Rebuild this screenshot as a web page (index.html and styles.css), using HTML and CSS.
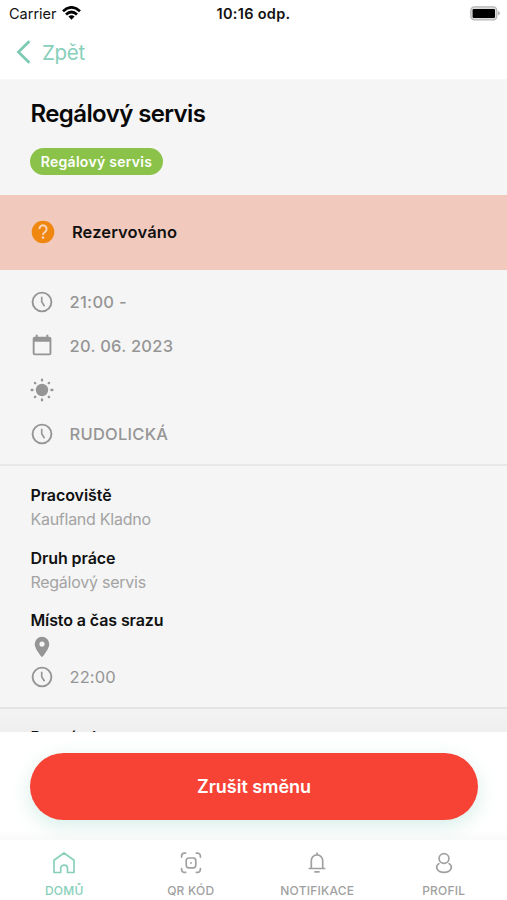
FILE: index.html
```html
<!DOCTYPE html>
<html lang="cs">
<head>
<meta charset="utf-8">
<title>Regálový servis</title>
<link rel="stylesheet" href="styles.css">
</head>
<body>
<svg class="defs" width="0" height="0" aria-hidden="true">
  <symbol id="clock" viewBox="0 0 24 24"><circle cx="12" cy="12" r="9.4" fill="none" stroke="currentColor" stroke-width="1.9"/><path d="M11.7 6.7v5.1l2.8 4.4" fill="none" stroke="currentColor" stroke-width="1.6"/></symbol>
</svg>
<div class="app">
  <header class="header">
    <div class="status">
      <div class="carrier"><span class="carrier-name">Carrier</span>
        <svg width="19" height="14" viewBox="0 0 19 14"><g fill="none" stroke="#000" stroke-width="2.7"><path d="M1 5.2Q9.5-2.5 18 5.2"/><path d="M4 8.6Q9.5 3.4 15 8.6"/></g><path d="M6.4 10.6Q9.5 8 12.6 10.6L9.5 13.8Z"/></svg>
      </div>
      <div class="time">10:16 odp.</div>
      <svg class="battery" width="30" height="15" viewBox="0 0 30 15"><rect x=".8" y=".8" width="26" height="13" rx="3.6" fill="#ddd" stroke="#b5b5b5" stroke-width="1.3"/><rect x="2.6" y="2.9" width="22.4" height="9" rx="1.2"/><path d="M28 5v4.6q2-.8 2-2.3T28 5" fill="#b5b5b5"/></svg>
    </div>
    <nav class="nav">
      <svg width="15" height="24" viewBox="0 0 15 24"><path d="M13.4 1.3L2.4 12l11 10.7" fill="none" stroke="#7dcab4" stroke-width="2.7"/></svg>
      <span class="back">Zpět</span>
    </nav>
  </header>
  <main class="content">
    <section class="hero"><h1>Regálový servis</h1><div class="badge">Regálový servis</div></section>
    <section class="banner">
      <svg width="24" height="24" viewBox="0 0 24 24"><circle cx="12" cy="12" r="11.3" fill="#f08710"/><path d="M8.4 9.1a3.6 3.6 0 1 1 5.7 2.8c-1.3.9-2.1 1.4-2.1 3" fill="none" stroke="#f8d3b8" stroke-width="2"/><circle cx="12" cy="17.6" r="1.3" fill="#f8d3b8"/></svg>
      <span>Rezervováno</span>
    </section>
    <section class="facts">
      <div class="fact"><svg width="24" height="24"><use href="#clock"/></svg><span class="t-time">21:00 -</span></div>
      <div class="fact"><svg width="24" height="24" viewBox="0 0 24 24"><path fill="currentColor" fill-rule="evenodd" d="M5.7.8h2v2h8.6v-2h2v2h1.1a2 2 0 0 1 2 2v14.4a2 2 0 0 1-2 2H4.7a2 2 0 0 1-2-2V4.8a2 2 0 0 1 2-2h1zM4.6 7.7v11.7h14.9V7.7z"/></svg><span class="t-date">20. 06. 2023</span></div>
      <div class="fact"><svg width="24" height="24" viewBox="0 0 24 24"><circle cx="12" cy="12" r="6.2" fill="currentColor"/><path d="M12 1.6v1M12 21.4v1M1.6 12h1M21.4 12h1M4.9 4.9l.4.4M18.7 18.7l.4.4M4.9 19.1l.4-.4M18.7 5.3l.4-.4" stroke="currentColor" stroke-width="2.3" stroke-linecap="round"/></svg></div>
      <div class="fact"><svg width="24" height="24"><use href="#clock"/></svg><span class="t-place">RUDOLICKÁ</span></div>
    </section>
    <section class="details">
      <div class="item"><h2 class="h-site">Pracoviště</h2><p class="p-site">Kaufland Kladno</p></div>
      <div class="item"><h2 class="h-type">Druh práce</h2><p class="p-type">Regálový servis</p></div>
      <h2 class="h-meet">Místo a čas srazu</h2>
      <svg class="pin" width="24" height="24" viewBox="0 0 24 24"><path fill="currentColor" fill-rule="evenodd" d="M12 1.8a7.3 7.3 0 0 0-7.3 7.3c0 5.3 7.3 13.2 7.3 13.2s7.3-7.9 7.3-13.2A7.3 7.3 0 0 0 12 1.8m0 4.7a2.6 2.6 0 1 1 0 5.2 2.6 2.6 0 0 1 0-5.2"/></svg>
      <div class="fact meet"><svg width="24" height="24"><use href="#clock"/></svg><span class="t-meet">22:00</span></div>
    </section>
    <section class="notes"><h2>Poznámka</h2></section>
  </main>
  <div class="action"><button class="cancel">Zrušit směnu</button></div>
  <footer class="tabs">
    <div class="tab active"><svg width="24" height="24" viewBox="0 0 24 24"><path d="M2 9.2L12 2l10 7.2v12.3h-6.5v-4.4c0-4-6.8-4-6.8 0v4.4H2z" fill="none" stroke="currentColor" stroke-width="1.7" stroke-linejoin="round"/></svg><span class="l-home">DOMŮ</span></div>
    <div class="tab"><svg width="24" height="24" viewBox="0 0 24 24"><g fill="none" stroke="currentColor" stroke-width="1.7" stroke-linecap="round"><path d="M2.6 6.1V5a2.8 2.8 0 0 1 2.8-2.8h1.2M17.4 2.2h1.2A2.8 2.8 0 0 1 21.4 5v1.1M21.4 17.5v1.1a2.8 2.8 0 0 1-2.8 2.8h-1.2M6.6 21.4H5.4a2.8 2.8 0 0 1-2.8-2.8v-1.1"/><rect x="7.2" y="7" width="9.6" height="9.8" rx="2.5"/></g><circle cx="12" cy="12" r=".9" fill="currentColor"/></svg><span class="l-qr">QR KÓD</span></div>
    <div class="tab"><svg width="24" height="24" viewBox="0 0 24 24"><path d="M12 2.2v1.4M4.3 17.5h15.4M6.3 17.2V9.6a5.7 5.7 0 0 1 11.4 0v7.6M10 20.8h4" fill="none" stroke="currentColor" stroke-width="1.7" stroke-linecap="round"/></svg><span class="l-note">NOTIFIKACE</span></div>
    <div class="tab"><svg width="24" height="24" viewBox="0 0 24 24"><g fill="none" stroke="currentColor" stroke-width="1.7" stroke-linecap="round"><circle cx="12" cy="7.5" r="4.9"/><path d="M6.9 12.6c-4.3 3.2-2.1 8.7 5.1 8.7s9.4-5.5 5.1-8.7"/></g></svg><span class="l-prof">PROFIL</span></div>
  </footer>
</div>
</body>
</html>
```

FILE: styles.css
```css
* { box-sizing: border-box; }
body { margin: 0; font-family: Inter, "Liberation Sans", sans-serif; background: #fff; color: #111; }
h1, h2, p { margin: 0; }
svg { display: block; flex: none; }
.defs { position: absolute; }
span, h1, h2, p, .time, .badge { white-space: nowrap; }
.app { width: 507px; height: 900px; display: flex; flex-direction: column; overflow: hidden; }
.header { height: 80px; flex: none; border-bottom: 1px solid #f8f8f8; }
.status { height: 28px; display: grid; grid-template-columns: 1fr auto 1fr; align-items: center; padding: 0 7px 1px 9px; font-size: 14.5px; }
.carrier { display: flex; align-items: center; gap: 5px; }
.carrier svg { margin-top: -1px; }
.time { font-weight: 600; padding-right: 2px; letter-spacing: .3px; }
.battery { justify-self: end; }
.nav { height: 48px; display: flex; align-items: center; gap: 11px; padding-left: 16px; color: #88cfbb; font-size: 20.5px; letter-spacing: -.3px; }
.content { height: 652px; flex: none; overflow: hidden; background: #f5f5f5; display: flex; flex-direction: column; }
.hero { height: 115px; flex: none; padding: 18px 30px 0; }
h1 { font-size: 24px; line-height: 32px; font-weight: 600; letter-spacing: -.6px; padding-left: .5px; color: #080808; }
.badge { width: 133px; height: 27px; margin-top: 18px; border-radius: 14px; background: #8bc34a; color: #fff; display: flex; align-items: center; justify-content: center; font-size: 14px; font-weight: 600; letter-spacing: .28px; padding-bottom: 1px; }
.banner { height: 75px; flex: none; background: #f1cabd; display: flex; align-items: center; gap: 16.5px; padding: 0 0 1px 31.4px; font-size: 16.5px; font-weight: 600; letter-spacing: .12px; }
.facts { height: 196px; flex: none; padding: 10px 30px 0 30.4px; border-bottom: 2px solid #e8e8e8; }
.fact { height: 44px; display: flex; align-items: center; gap: 15.1px; color: #959595; font-size: 16.5px; font-weight: 500; }
.t-time { letter-spacing: .3px; }
.t-date, .t-place { letter-spacing: .26px; }
.details { height: 243px; flex: none; padding: 18px 30px 0 30.4px; border-bottom: 2px solid #e4e4e4; }
.item { height: 63px; }
.item:nth-child(2) { height: 62px; }
h2 { font-size: 16px; line-height: 23px; font-weight: 600; letter-spacing: -.1px; }
.h-site, .h-type { letter-spacing: -.06px; }
p { font-size: 16px; line-height: 25px; color: #a3a3a3; letter-spacing: -.25px; }
.pin { color: #959595; margin-top: 3px; }
.meet { font-weight: 400; height: 36px; }
.t-meet { letter-spacing: .1px; }
.notes { flex: 1; padding: 17px 30.4px 0; background: linear-gradient(#f3f3f3, #ececec); }
.action { height: 108px; flex: none; padding: 21px 29px 0 30px; background: linear-gradient(#fff 90%, #fafafa); overflow: hidden; }
.cancel { display: block; width: 448px; height: 67px; border: 0; border-radius: 34px; background: #f64336; color: #fff; font: 600 18px Inter, "Liberation Sans", sans-serif; box-shadow: 0 6px 20px rgba(83, 185, 158, .24); }
.tabs { height: 60px; flex: none; display: grid; grid-template-columns: repeat(4, 1fr); padding: 11px 0 0 1px; background: #fff; }
.tab { display: flex; flex-direction: column; align-items: center; gap: 8px; color: #a1a1a1; font-size: 12px; line-height: 16px; font-weight: 500; letter-spacing: .22px; }
.active { color: #88cfbb; }
```
